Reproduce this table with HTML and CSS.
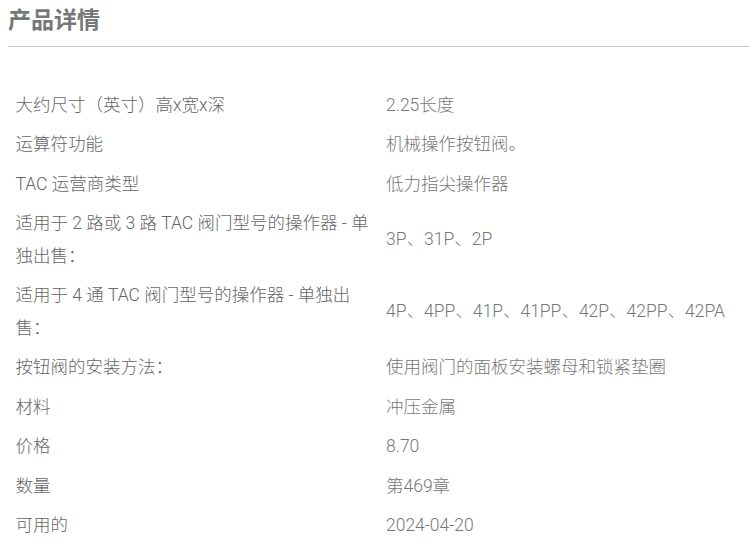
FILE: index.html
```html
<!DOCTYPE html>
<html lang="zh-CN">
<head>
  <meta charset="UTF-8" />
  <meta name="viewport" content="width=device-width, initial-scale=1.0"/>
  <title>产品详情</title>
  <link rel="stylesheet" href="styles.css">
</head>
<body>

  <section class="details">
    <h2>产品详情</h2>

    <table class="spec-table">
      <tr>
        <td>大约尺寸（英寸）高x宽x深</td>
        <td>2.25长度</td>
      </tr>
      <tr>
        <td>运算符功能</td>
        <td>机械操作按钮阀。</td>
      </tr>
      <tr>
        <td>TAC 运营商类型</td>
        <td>低力指尖操作器</td>
      </tr>
      <tr>
        <td>适用于 2 路或 3 路 TAC 阀门型号的操作器 - 单独出售：</td>
        <td>3P、31P、2P</td>
      </tr>
      <tr>
        <td>适用于 4 通 TAC 阀门型号的操作器 - 单独出售：</td>
        <td>4P、4PP、41P、41PP、42P、42PP、42PA</td>
      </tr>
      <tr>
        <td>按钮阀的安装方法：</td>
        <td>使用阀门的面板安装螺母和锁紧垫圈</td>
      </tr>
      <tr>
        <td>材料</td>
        <td>冲压金属</td>
      </tr>
      <tr>
        <td>价格</td>
        <td>8.70</td>
      </tr>
      <tr>
        <td>数量</td>
        <td>第469章</td>
      </tr>
      <tr>
        <td>可用的</td>
        <td>2024-04-20</td>
      </tr>
    </table>
  </section>

</body>
</html>
```

FILE: styles.css
```css
body {
  margin: 0 0 0 8px;
  font-family: Roboto, "Noto Sans CJK SC", sans-serif;
  background: #fff;
  color: #666;
}

h2 {
  margin: 6px 0 0;
  padding-bottom: 10px;
  font-size: 23px;
  line-height: 30px;
  font-weight: bold;
  color: #777;
  border-bottom: 1px solid #ccc;
}

.spec-table {
  width: 741px;
  margin-top: 38px;
  border-collapse: collapse;
  font-size: 17.5px;
  font-weight: 300;
}

.spec-table td {
  width: 50%;
  padding: 3.5px 8px 3.5px 7.5px;
  line-height: 32.5px;
  vertical-align: middle;
}

.spec-table td:last-child {
  color: #777;
}
```
